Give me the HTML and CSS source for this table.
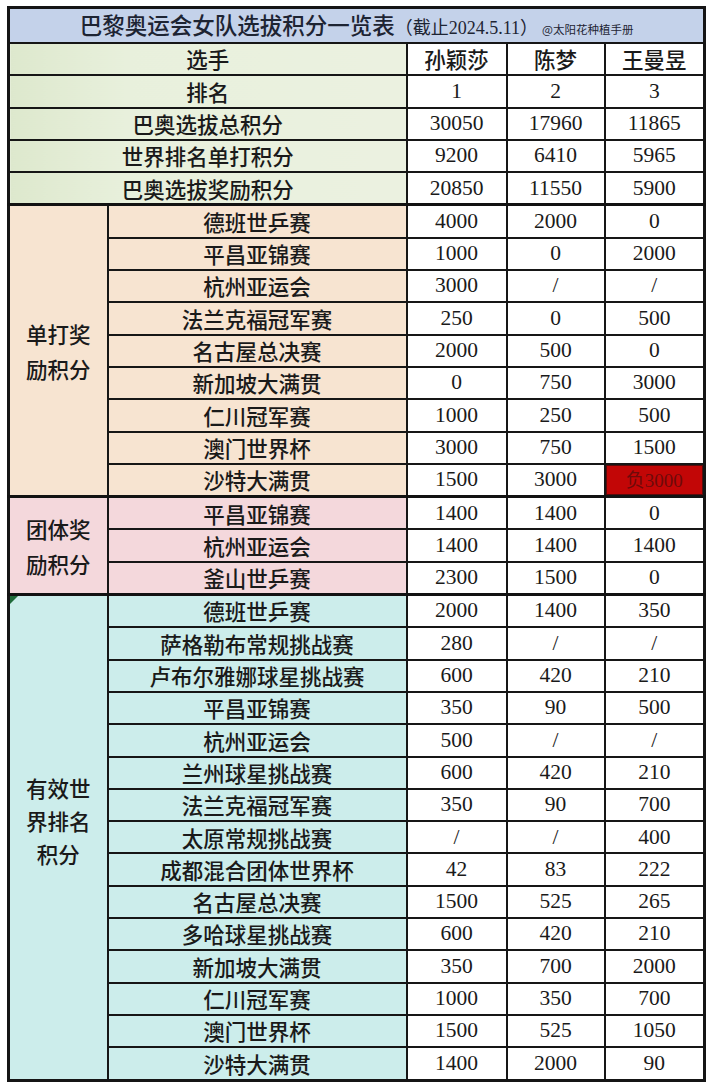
FILE: index.html
```html
<!DOCTYPE html>
<html lang="zh">
<head>
<meta charset="utf-8">
<title>巴黎奥运会女队选拔积分一览表</title>
<link rel="stylesheet" href="styles.css">
</head>
<body>
<table class="sheet">
  <colgroup>
    <col class="c-cat"><col class="c-ev"><col class="c-v1"><col class="c-v2"><col class="c-v3">
  </colgroup>
  <tbody>
    <tr class="title-row">
      <td colspan="5" class="title"><span class="t-main">巴黎奥运会女队选拔积分一览表</span><span class="t-date">（截止2024.5.11）</span><span class="t-src">@太阳花种植手册</span></td>
    </tr>
    <tr class="head"><td colspan="2" class="lab">选手</td><td class="name">孙颖莎</td><td class="name">陈梦</td><td class="name">王曼昱</td></tr>
    <tr class="head"><td colspan="2" class="lab">排名</td><td>1</td><td>2</td><td>3</td></tr>
    <tr class="head"><td colspan="2" class="lab">巴奥选拔总积分</td><td>30050</td><td>17960</td><td>11865</td></tr>
    <tr class="head"><td colspan="2" class="lab">世界排名单打积分</td><td>9200</td><td>6410</td><td>5965</td></tr>
    <tr class="head"><td colspan="2" class="lab">巴奥选拔奖励积分</td><td>20850</td><td>11550</td><td>5900</td></tr>

    <tr class="single group-start"><td rowspan="9" class="cat">单打奖<br>励积分</td><td class="ev">德班世乒赛</td><td>4000</td><td>2000</td><td>0</td></tr>
    <tr class="single"><td class="ev">平昌亚锦赛</td><td>1000</td><td>0</td><td>2000</td></tr>
    <tr class="single"><td class="ev">杭州亚运会</td><td>3000</td><td class="sl">/</td><td class="sl">/</td></tr>
    <tr class="single"><td class="ev">法兰克福冠军赛</td><td>250</td><td>0</td><td>500</td></tr>
    <tr class="single"><td class="ev">名古屋总决赛</td><td>2000</td><td>500</td><td>0</td></tr>
    <tr class="single"><td class="ev">新加坡大满贯</td><td>0</td><td>750</td><td>3000</td></tr>
    <tr class="single"><td class="ev">仁川冠军赛</td><td>1000</td><td>250</td><td>500</td></tr>
    <tr class="single"><td class="ev">澳门世界杯</td><td>3000</td><td>750</td><td>1500</td></tr>
    <tr class="single"><td class="ev">沙特大满贯</td><td>1500</td><td>3000</td><td class="neg">负3000</td></tr>

    <tr class="team group-start"><td rowspan="3" class="cat">团体奖<br>励积分</td><td class="ev">平昌亚锦赛</td><td>1400</td><td>1400</td><td>0</td></tr>
    <tr class="team"><td class="ev">杭州亚运会</td><td>1400</td><td>1400</td><td>1400</td></tr>
    <tr class="team"><td class="ev">釜山世乒赛</td><td>2300</td><td>1500</td><td>0</td></tr>

    <tr class="world group-start"><td rowspan="15" class="cat cat-world"><span class="flag"></span>有效世<br>界排名<br>积分</td><td class="ev">德班世乒赛</td><td>2000</td><td>1400</td><td>350</td></tr>
    <tr class="world"><td class="ev">萨格勒布常规挑战赛</td><td>280</td><td class="sl">/</td><td class="sl">/</td></tr>
    <tr class="world"><td class="ev">卢布尔雅娜球星挑战赛</td><td>600</td><td>420</td><td>210</td></tr>
    <tr class="world"><td class="ev">平昌亚锦赛</td><td>350</td><td>90</td><td>500</td></tr>
    <tr class="world"><td class="ev">杭州亚运会</td><td>500</td><td class="sl">/</td><td class="sl">/</td></tr>
    <tr class="world"><td class="ev">兰州球星挑战赛</td><td>600</td><td>420</td><td>210</td></tr>
    <tr class="world"><td class="ev">法兰克福冠军赛</td><td>350</td><td>90</td><td>700</td></tr>
    <tr class="world"><td class="ev">太原常规挑战赛</td><td class="sl">/</td><td class="sl">/</td><td>400</td></tr>
    <tr class="world"><td class="ev">成都混合团体世界杯</td><td>42</td><td>83</td><td>222</td></tr>
    <tr class="world"><td class="ev">名古屋总决赛</td><td>1500</td><td>525</td><td>265</td></tr>
    <tr class="world"><td class="ev">多哈球星挑战赛</td><td>600</td><td>420</td><td>210</td></tr>
    <tr class="world"><td class="ev">新加坡大满贯</td><td>350</td><td>700</td><td>2000</td></tr>
    <tr class="world"><td class="ev">仁川冠军赛</td><td>1000</td><td>350</td><td>700</td></tr>
    <tr class="world"><td class="ev">澳门世界杯</td><td>1500</td><td>525</td><td>1050</td></tr>
    <tr class="world"><td class="ev">沙特大满贯</td><td>1400</td><td>2000</td><td>90</td></tr>
  </tbody>
</table>
</body>
</html>
```

FILE: styles.css
```css
html, body {
  margin: 0;
  padding: 0;
  background: #ffffff;
}

body {
  padding: 6px 0 0 7px;
}

.sheet {
  border-collapse: collapse;
  table-layout: fixed;
  width: 696px;
  border: 3px solid #151515;
  font-family: "Liberation Serif", "Noto Sans CJK SC", serif;
  color: #1a1a1a;
}

.c-cat { width: 99px; }
.c-ev { width: 299px; }
.c-v1 { width: 100px; }
.c-v2 { width: 98px; }
.c-v3 { width: 100px; }

.sheet td {
  border: 2px solid #161616;
  padding: 0;
  text-align: center;
  vertical-align: middle;
  background: #ffffff;
  font-size: 21.5px;
  line-height: 1;
  height: 30.3px;
  white-space: nowrap;
}

.sheet .title-row td {
  height: 33px;
}

.sheet td.title {
  background: #c4d2ea;
}

.t-main {
  font-family: "Noto Sans CJK SC", sans-serif;
  font-size: 22.5px;
  font-weight: 500;
  color: #1d2433;
}

.t-date {
  font-family: "Liberation Serif", "Noto Sans CJK SC", serif;
  font-size: 18px;
  color: #1d2433;
}

.t-src {
  font-family: "Noto Sans CJK SC", sans-serif;
  font-size: 11.5px;
  color: #1d2433;
  margin-left: 4px;
}

.sheet td.lab,
.sheet td.ev,
.sheet td.cat,
.sheet td.name {
  font-family: "Noto Sans CJK SC", sans-serif;
  font-size: 21.5px;
  font-weight: 500;
}

.sheet .head td.lab {
  background: linear-gradient(90deg, #dde8cd 0%, #e8f0dc 30%, #ebf1e0 100%);
}

.sheet .single td.ev,
.sheet .single td.cat {
  background: #f7e4d1;
}

.sheet .team td.ev,
.sheet .team td.cat {
  background: #f4d8dc;
}

.sheet .world td.ev,
.sheet .world td.cat {
  background: #ccedeb;
}

.sheet td.cat {
  line-height: 35px;
}

.sheet td.cat-world {
  position: relative;
  line-height: 33px;
  padding-bottom: 34px;
}

.flag {
  position: absolute;
  left: 0;
  top: 0;
  width: 0;
  height: 0;
  border-top: 8px solid #1f6b3a;
  border-right: 8px solid transparent;
}

.sheet .group-start td {
  border-top: 3px solid #121212;
}

.sheet td.sl {
  font-family: "Liberation Serif", serif;
}

.sheet td.neg {
  background: #c20606;
  color: #6e0a0a;
  font-size: 19px;
  box-shadow: inset 0 0 0 1px #5a0a0a;
}
```
